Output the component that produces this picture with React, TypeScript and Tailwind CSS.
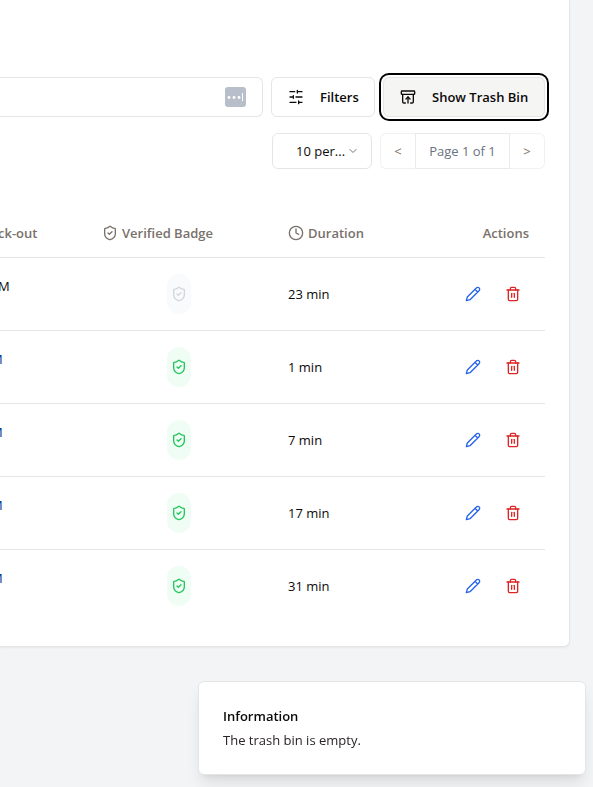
import React from "react";
import { ShieldCheck, Clock, Trash2, ArchiveRestore, ChevronDown } from "lucide-react";

type Row = { id: number; verified: boolean; duration: string; wide: boolean };

const rows: Row[] = [
  { id: 1, verified: false, duration: "23 min", wide: true },
  { id: 2, verified: true, duration: "1 min", wide: false },
  { id: 3, verified: true, duration: "7 min", wide: false },
  { id: 4, verified: true, duration: "17 min", wide: false },
  { id: 5, verified: true, duration: "31 min", wide: false },
];

function Glyph({ d }: { d: string }) {
  return (
    <svg
      width="16"
      height="16"
      viewBox="0 0 24 24"
      fill="none"
      stroke="currentColor"
      strokeWidth="2"
      strokeLinecap="round"
      strokeLinejoin="round"
      aria-hidden="true"
    >
      <path d={d} />
    </svg>
  );
}

const slidersPath = "M21 4h-7M10 4H3M21 12h-9M8 12H3M21 20h-5M12 20H3M14 2v4M8 10v4M16 18v4";
const pencilPath = "M17 3a2.85 2.83 0 1 1 4 4L7.5 20.5 2 22l1.5-5.5ZM15 5l4 4";

function Toolbar() {
  return (
    <div className="flex gap-2">
      <div className="relative flex-1">
        <input
          type="text"
          aria-label="Search"
          className="h-10 w-full rounded-r-md border border-l-0 border-[#e5e5e5] bg-white pr-12 outline-none"
        />
        <svg className="absolute top-[10px] right-[17px]" width="21" height="20" viewBox="0 0 21 20" aria-hidden="true">
          <rect width="21" height="20" rx="3" fill="#b8bfca" />
          <circle cx="4" cy="10.5" r="1.4" fill="#fff" />
          <circle cx="9" cy="10.5" r="1.4" fill="#fff" />
          <circle cx="14" cy="10.5" r="1.4" fill="#fff" />
          <rect x="17" y="6" width="1" height="8" fill="#fff" />
        </svg>
      </div>
      <button className="flex h-10 w-[104px] items-center gap-4 rounded-md border border-[#e5e5e5] bg-white pl-4 font-semibold">
        <Glyph d={slidersPath} />
        Filters
      </button>
      <button className="flex h-10 w-[162px] items-center gap-4 rounded-md border border-[#e5e5e5] bg-stone-100 pl-4 font-semibold ring-2 ring-black ring-offset-2">
        <ArchiveRestore size={16} />
        Show Trash Bin
      </button>
    </div>
  );
}

function Pager() {
  return (
    <div className="mt-4 flex justify-end gap-2">
      <div className="relative w-[100px]">
        <select
          aria-label="Rows per page"
          className="h-9 w-full appearance-none rounded-md border border-[#e5e5e5] bg-white pl-[23px]"
        >
          <option>10 per...</option>
        </select>
        <ChevronDown size={12} className="pointer-events-none absolute top-3 right-[13px] text-stone-500" />
      </div>
      <nav aria-label="Pages" className="flex h-9 w-[165px] text-stone-500">
        <button disabled className="w-[35px] rounded-l-md border border-r-0 border-[#f1f1f1]">
          &lt;
        </button>
        <span className="flex flex-1 items-center justify-center border border-[#eaeaea] text-gray-500">Page 1 of 1</span>
        <button disabled className="w-[35px] rounded-r-md border border-l-0 border-[#f1f1f1]">
          &gt;
        </button>
      </nav>
    </div>
  );
}

function Visits() {
  return (
    <table className="mt-10 w-full table-fixed text-left">
      <colgroup>
        <col className="w-[86px]" />
        <col className="w-[186px]" />
        <col />
        <col className="w-[112px]" />
      </colgroup>
      <thead>
        <tr className="h-12 border-b border-[#e5e5e5] text-stone-500">
          <th className="font-semibold">
            <span className="-ml-0.5">ck-out</span>
          </th>
          <th className="pl-4 font-semibold">
            <span className="flex items-center gap-1">
              <ShieldCheck size={16} />
              Verified Badge
            </span>
          </th>
          <th className="pl-4 font-semibold">
            <span className="flex items-center gap-1">
              <Clock size={16} />
              Duration
            </span>
          </th>
          <th className="pr-4 text-right font-semibold">Actions</th>
        </tr>
      </thead>
      <tbody>
        {rows.map((row) => (
          <tr key={row.id} className="h-[73px] border-b border-[#e5e5e5] last:border-0">
            <td className="pb-4">
              <span className={row.wide ? "-ml-0.5" : "-ml-[9px] text-[#003090]"}>M</span>
            </td>
            <td>
              <span
                className={
                  row.verified
                    ? "mx-auto flex h-10 w-6 items-center justify-center rounded-full bg-[#f0fdf4] text-[#22c55e]"
                    : "mx-auto flex h-10 w-6 items-center justify-center rounded-full bg-gray-50 text-gray-300"
                }
              >
                <ShieldCheck size={16} />
              </span>
            </td>
            <td className="pl-4">{row.duration}</td>
            <td className="pr-4">
              <div className="flex justify-end gap-2">
                <button aria-label="Edit" className="flex size-8 items-center justify-center text-[#2563eb]">
                  <Glyph d={pencilPath} />
                </button>
                <button aria-label="Delete" className="flex size-8 items-center justify-center text-[#dc2626]">
                  <Trash2 size={16} />
                </button>
              </div>
            </td>
          </tr>
        ))}
      </tbody>
    </table>
  );
}

export default function App() {
  return (
    <div className="min-h-screen overflow-hidden bg-gray-100 font-['Open_Sans',sans-serif] text-[13px] leading-5 text-stone-950">
      <main className="mr-[23px] rounded-br-md border-r border-b border-[#e5e5e5] bg-white pt-[77px] pr-6 pb-6 shadow-xs">
        <Toolbar />
        <Pager />
        <Visits />
      </main>
      <div
        role="status"
        className="fixed right-[7px] bottom-3 w-[388px] space-y-1 rounded-md border border-[#e5e5e5] bg-white p-6 shadow-lg"
      >
        <p className="font-semibold">Information</p>
        <p className="text-stone-800">The trash bin is empty.</p>
      </div>
    </div>
  );
}
